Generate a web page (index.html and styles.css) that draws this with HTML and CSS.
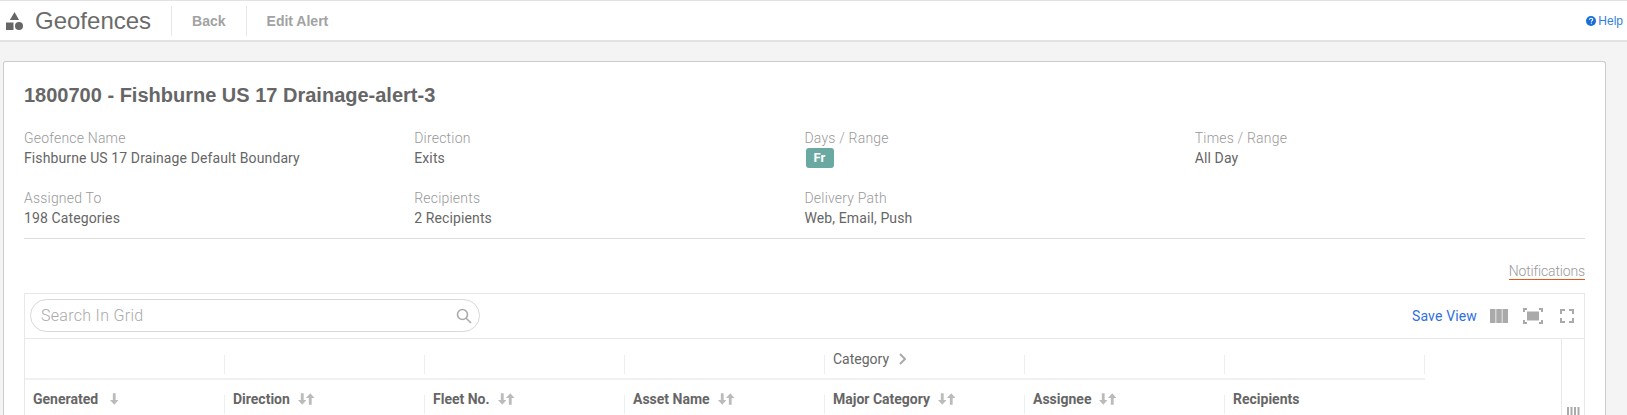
FILE: index.html
```html
<!DOCTYPE html>
<html lang="en">
<head>
<meta charset="utf-8">
<title>Geofences</title>
<link rel="stylesheet" href="styles.css">
</head>
<body>
<svg class="defs" width="0" height="0" aria-hidden="true">
  <symbol id="down" viewBox="0 0 9 12"><path d="M3 0h3v7h3l-4.500 5L0 7h3z"/></symbol>
  <symbol id="up" viewBox="0 0 9 12"><path d="M3 12h3V5h3L4.500 0 0 5h3z"/></symbol>
</svg>
<header class="topbar">
  <svg class="logo" viewBox="0 0 17 18" width="17" height="18"><path d="M8.500 0l4.600 8H3.900z"/><rect x="0" y="10.500" width="7.500" height="7.500"/><circle cx="13" cy="14" r="4"/></svg>
  <h1 class="app-title">Geofences</h1>
  <a class="nav-link">Back</a>
  <a class="nav-link">Edit Alert</a>
  <a class="help"><svg viewBox="0 0 10 10" width="10" height="10"><circle cx="5" cy="5" r="5" fill="#1a6fd6"/><path d="M3.400 3.800c.1-1 .8-1.500 1.700-1.500 1 0 1.600.6 1.600 1.300 0 1.200-1.300 1.100-1.300 2.200" fill="none" stroke="#fff" stroke-width="1.100"/><rect x="4.800" y="6.600" width="1.100" height="1.100" fill="#fff"/></svg>Help</a>
</header>
<main class="card">
  <h2 class="alert-title">1800700 - Fishburne US 17 Drainage-alert-3</h2>
  <section class="details">
    <div class="field"><div class="label">Geofence Name</div><div class="value">Fishburne US 17 Drainage Default Boundary</div></div>
    <div class="field"><div class="label">Direction</div><div class="value">Exits</div></div>
    <div class="field"><div class="label">Days / Range</div><div class="value"><span class="day">Fr</span></div></div>
    <div class="field"><div class="label">Times / Range</div><div class="value">All Day</div></div>
    <div class="field"><div class="label">Assigned To</div><div class="value">198 Categories</div></div>
    <div class="field"><div class="label">Recipients</div><div class="value">2 Recipients</div></div>
    <div class="field"><div class="label">Delivery Path</div><div class="value">Web, Email, Push</div></div>
  </section>
  <div class="tabs"><a class="tab">Notifications</a></div>
  <section class="grid">
    <div class="toolbar">
      <div class="search">
        <span class="search-text">Search In Grid</span>
        <svg viewBox="0 0 16 16" width="16" height="16" fill="none" stroke="#aaa" stroke-width="1.600"><circle cx="6.500" cy="6.500" r="5"/><path d="M10.200 10.200L15 15"/></svg>
      </div>
      <div class="tools">
        <a class="save">Save View</a>
        <svg class="tool-cols" viewBox="0 0 18 14" width="18" height="14" fill="#aaa"><rect width="5.500" height="14"/><rect x="6.250" width="5.500" height="14"/><rect x="12.500" width="5.500" height="14"/></svg>
        <svg class="tool-fit" viewBox="0 0 20 16" width="20" height="16" fill="none" stroke="#aaa" stroke-width="2"><path d="M1 4V1h3M16 1h3v3M19 12v3h-3M4 15H1v-3"/><rect x="4" y="3.500" width="12" height="9" fill="#aaa" stroke="none"/></svg>
        <svg viewBox="0 0 14 14" width="14" height="14" fill="none" stroke="#aaa" stroke-width="2"><path d="M1 5V1h4M9 1h4v4M13 9v4H9M5 13H1V9"/></svg>
      </div>
    </div>
    <div class="grid-body">
      <div class="columns">
        <div class="group-row">
          <div class="group-cell"></div>
          <div class="group-cell"></div>
          <div class="group-cell"></div>
          <div class="group-cell"></div>
          <div class="group-cell"><div class="group-label">Category<svg class="chev" viewBox="0 0 8 12" width="8" height="12" fill="none" stroke="#aaa" stroke-width="2"><path d="M1 1l5 5-5 5"/></svg></div></div>
          <div class="group-cell"></div>
          <div class="group-cell"></div>
        </div>
        <div class="head-row">
          <div class="head-cell"><div class="head-label"><span class="wide">Generated</span><svg class="arrow"><use href="#down"/></svg></div></div>
          <div class="head-cell"><div class="head-label">Direction<svg class="arrow"><use href="#down"/></svg><svg class="arrow"><use href="#up"/></svg></div></div>
          <div class="head-cell"><div class="head-label">Fleet No.<svg class="arrow"><use href="#down"/></svg><svg class="arrow"><use href="#up"/></svg></div></div>
          <div class="head-cell"><div class="head-label">Asset Name<svg class="arrow"><use href="#down"/></svg><svg class="arrow"><use href="#up"/></svg></div></div>
          <div class="head-cell"><div class="head-label">Major Category<svg class="arrow"><use href="#down"/></svg><svg class="arrow"><use href="#up"/></svg></div></div>
          <div class="head-cell"><div class="head-label">Assignee<svg class="arrow"><use href="#down"/></svg><svg class="arrow"><use href="#up"/></svg></div></div>
          <div class="head-cell"><div class="head-label">Recipients</div></div>
        </div>
      </div>
      <aside class="side">
        <svg viewBox="0 0 13 8" width="13" height="8" fill="#aaa"><rect width="2" height="8"/><rect x="3.500" width="2" height="8"/><rect x="7" width="2" height="8"/><rect x="10.500" width="2" height="8"/></svg>
      </aside>
    </div>
  </section>
</main>
</body>
</html>
```
FILE: styles.css
```css
* { box-sizing: border-box; }
html, body { height: 415px; }
body {
  margin: 0;
  background: #f4f4f4;
  overflow: hidden;
  display: flex;
  flex-direction: column;
  font-family: Roboto, "Liberation Sans", sans-serif;
  color: #666;
}
.defs { display: block; height: 0; position: absolute; }
.topbar {
  height: 42px;
  flex: none;
  background: #fff;
  border-top: 1px solid #e2e2e2;
  border-bottom: 2px solid #e2e2e2;
  display: flex;
  align-items: center;
  padding-left: 6px;
  padding-right: 4px;
  font-family: "Liberation Sans", Arial, sans-serif;
}
.logo { fill: #666; flex: none; margin-top: 1px; }
.app-title {
  margin: 0 20px 0 12px;
  font-size: 24px;
  font-weight: 400;
  color: #6b6b6b;
}
.nav-link {
  height: 30px;
  line-height: 30px;
  padding: 0 20px;
  border-left: 1px solid #e4e8ec;
  font-size: 14px;
  font-weight: 700;
  color: #a2a2a2;
}
.help {
  margin-left: auto;
  display: flex;
  align-items: center;
  gap: 2px;
  font-size: 12px;
  color: #2f7fe0;
}
.card {
  flex: 1;
  min-height: 0;
  overflow: hidden;
  margin: 19px 21px 0 3px;
  padding: 21px 20px 0;
  background: #fff;
  border: 1px solid #ccc;
  border-bottom: 0;
  border-radius: 3px 3px 0 0;
}
.alert-title {
  margin: 0;
  font-family: "Liberation Sans", Arial, sans-serif;
  font-size: 20px;
  line-height: 24px;
  font-weight: 700;
  color: #666;
}
.details {
  margin-top: 21px;
  display: grid;
  grid-template-columns: repeat(4, 1fr);
  row-gap: 20px;
  padding-bottom: 10px;
  border-bottom: 1px solid #ddd;
}
.label { font-size: 14px; line-height: 20px; font-weight: 300; color: #999; letter-spacing: .2px; }
.value { font-size: 14px; line-height: 20px; color: #666; letter-spacing: .11px; }
.day {
  display: block;
  width: 28px;
  height: 20px;
  margin-left: 1px;
  border-radius: 3px;
  background: #6aa9a2;
  color: #fff;
  font-size: 13px;
  font-weight: 700;
  line-height: 20px;
  text-align: center;
}
.tabs {
  display: flex;
  justify-content: flex-end;
  margin-top: 24px;
}
.tab {
  font-size: 14px;
  line-height: 16px;
  font-weight: 300;
  color: #999;
  letter-spacing: -.15px;
  border-bottom: 1px solid #e8561c;
}
.grid {
  margin-top: 13px;
  border: 1px solid #e6e8ee;
  border-bottom: 0;
}
.toolbar {
  height: 45px;
  padding: 5px 10px 0 5px;
  border-bottom: 1px solid #e6e8ee;
  display: flex;
  justify-content: space-between;
}
.search {
  width: 450px;
  height: 33px;
  padding: 0 7px 0 10px;
  border: 1px solid #d8d8d8;
  border-radius: 17px;
  display: flex;
  align-items: center;
  justify-content: space-between;
}
.search-text { font-size: 16px; font-weight: 300; color: #aaa; letter-spacing: .3px; }
.tools { height: 33px; display: flex; align-items: center; }
.save { font-size: 14px; color: #2f6fe0; margin-right: 13px; letter-spacing: .15px; }
.tool-fit { margin: 0 17px 0 15px; }
.grid-body { display: flex; height: 80px; }
.columns { width: 1400px; flex: none; font-size: 14px; color: #666; }
.group-row {
  display: flex;
  height: 41px;
  border-bottom: 2px solid #eef0f2;
  padding-top: 16px;
}
.group-cell {
  width: 200px;
  height: 19px;
  padding-left: 8px;
  border-right: 1px solid #eceef0;
  font-size: 14px;
}
.group-label { margin-top: -4px; display: flex; align-items: center; height: 16px; }
.chev { margin-left: 10px; }
.head-row { display: flex; padding-top: 15px; }
.head-cell {
  width: 200px;
  height: 19px;
  padding-left: 8px;
  border-right: 1px solid #eceef0;
  font-weight: 700;
  color: #666;
}
.head-cell:last-child { border-right: 0; }
.head-label { margin-top: -6px; height: 20px; display: flex; align-items: center; }
.wide { margin-right: 4px; }
.arrow { width: 8.500px; height: 12px; fill: #bbb; flex: none; }
.arrow:first-of-type { margin-left: 8px; }
.side {
  flex: 1;
  margin-left: 136px;
  border-left: 1px solid #e6e8ee;
  padding: 68px 0 0 5px;
}
.side svg { display: block; }
```
